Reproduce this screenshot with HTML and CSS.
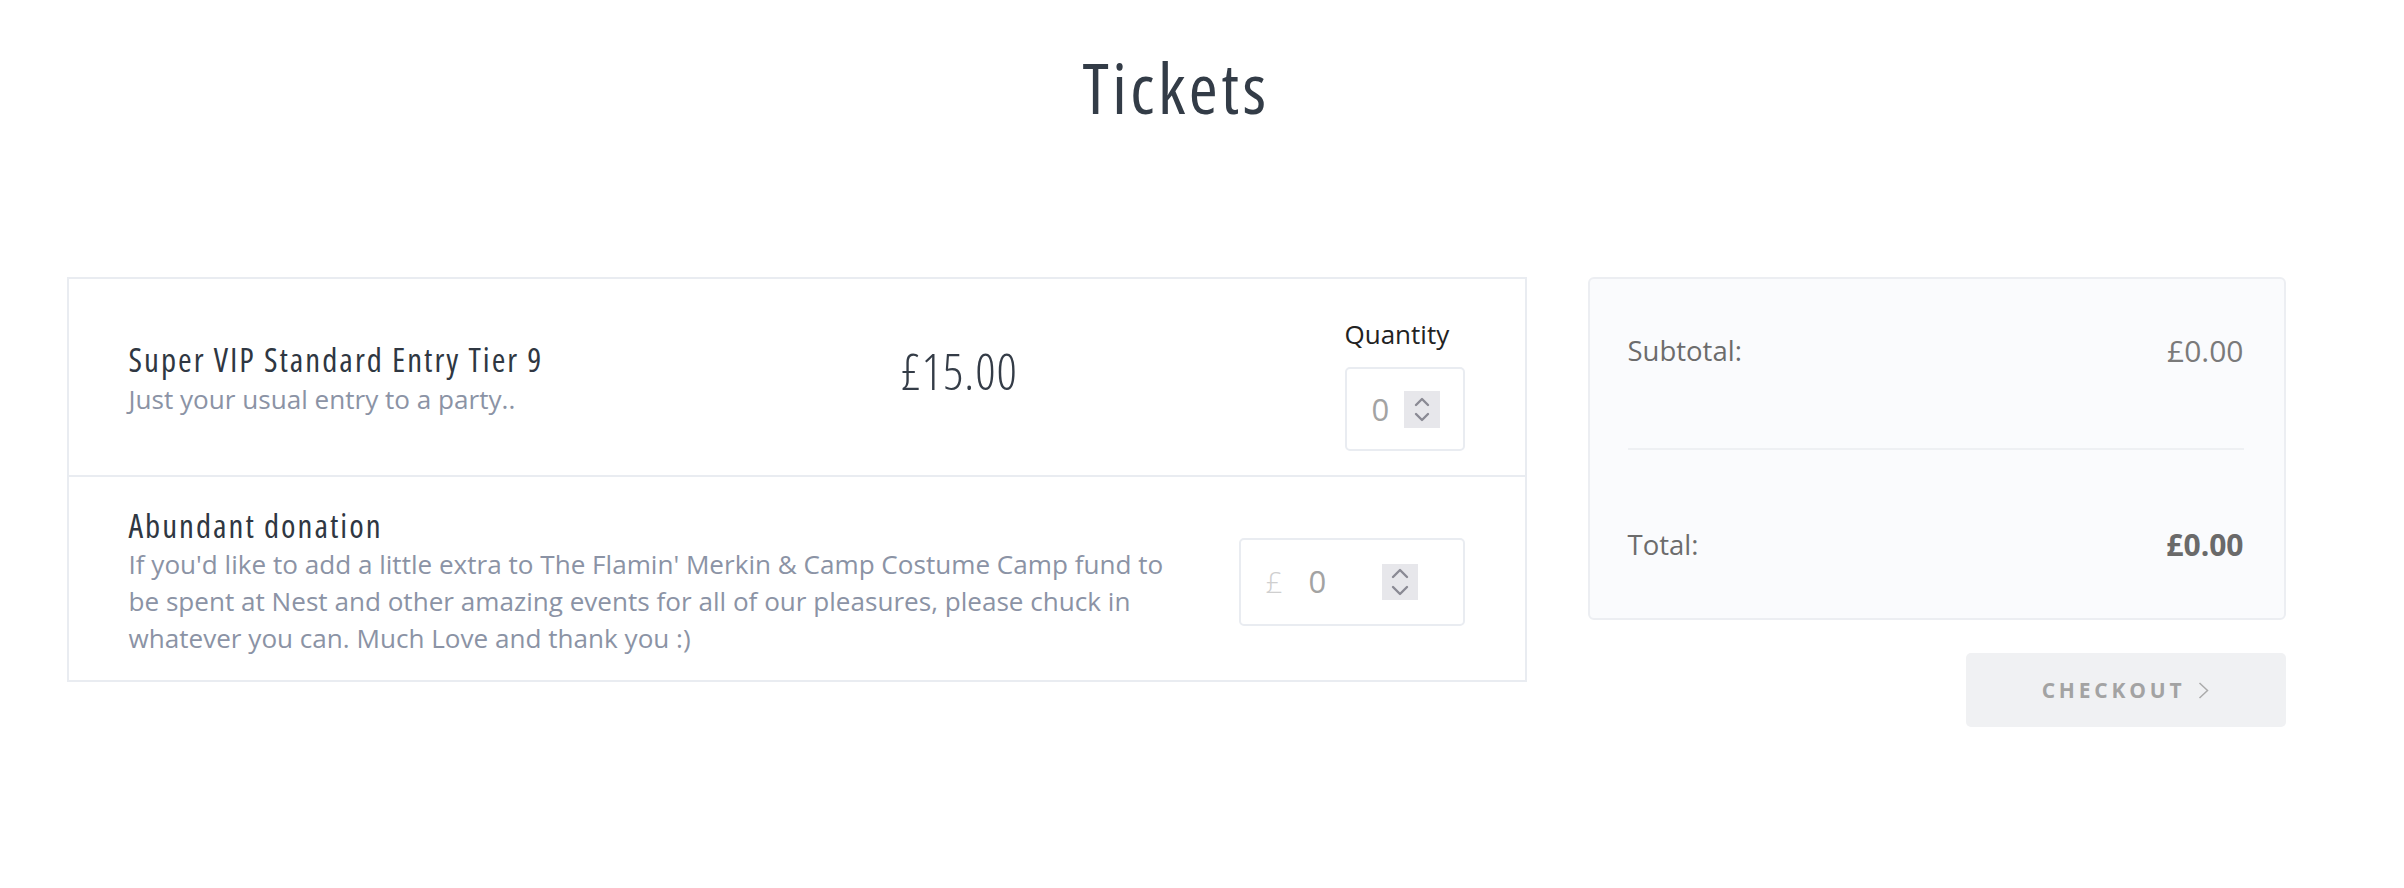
FILE: index.html
```html
<!DOCTYPE html>
<html lang="en">
<head>
<meta charset="utf-8">
<title>Tickets</title>
<link rel="stylesheet" href="styles.css">
</head>
<body>
<div class="page">
  <h1 class="page-title">Tickets</h1>
  <div class="layout">
    <section class="tickets">
      <div class="ticket ticket-main">
        <div class="info">
          <div class="name">Super VIP Standard Entry Tier 9</div>
          <div class="desc">Just your usual entry to a party..</div>
        </div>
        <div class="price">£15.00</div>
        <div class="qty">
          <div class="qty-label">Quantity</div>
          <div class="field qty-field">
            <span class="val">0</span>
            <span class="spin">
              <svg width="36" height="37" viewBox="0 0 36 37"><polyline points="12,14 18,8 24,14" fill="none" stroke="#8a8a94" stroke-width="2.4" stroke-linecap="round" stroke-linejoin="round"/><polyline points="12,23 18,29 24,23" fill="none" stroke="#8a8a94" stroke-width="2.4" stroke-linecap="round" stroke-linejoin="round"/></svg>
            </span>
          </div>
        </div>
      </div>
      <div class="ticket ticket-donation">
        <div class="info info-wide">
          <div class="name">Abundant donation</div>
          <div class="desc desc-long">If you'd like to add a little extra to The Flamin' Merkin &amp; Camp Costume Camp fund to be spent at Nest and other amazing events for all of our pleasures, please chuck in whatever you can. Much Love and thank you :)</div>
        </div>
        <div class="field donation-field">
          <span class="currency">£</span>
          <span class="val">0</span>
          <span class="spin">
            <svg width="36" height="36" viewBox="0 0 36 36"><polyline points="11,13 18,6 25,13" fill="none" stroke="#8a8a94" stroke-width="2.4" stroke-linecap="round" stroke-linejoin="round"/><polyline points="11,23 18,30 25,23" fill="none" stroke="#8a8a94" stroke-width="2.4" stroke-linecap="round" stroke-linejoin="round"/></svg>
          </span>
        </div>
      </div>
    </section>
    <aside class="side">
      <div class="summary">
        <div class="sum-row">
          <span class="sum-label">Subtotal:</span>
          <span class="sum-value">£0.00</span>
        </div>
        <div class="sum-divider"></div>
        <div class="sum-row">
          <span class="sum-label">Total:</span>
          <span class="sum-value sum-total">£0.00</span>
        </div>
      </div>
      <button class="checkout" type="button">
        <span class="checkout-text">CHECKOUT</span>
        <svg class="checkout-chev" width="11" height="17" viewBox="0 0 11 17"><polyline points="1.5,1 9.5,8.5 1.5,16" fill="none" stroke="#ababab" stroke-width="1.5"/></svg>
      </button>
    </aside>
  </div>
</div>
</body>
</html>
```

FILE: styles.css
```css
* { box-sizing: border-box; }

html, body {
  margin: 0;
  padding: 0;
  background: #ffffff;
}

body {
  font-family: "Open Sans", "Noto Sans", "Liberation Sans", sans-serif;
  color: #333;
}

.page {
  width: 2352px;
  padding-top: 46px;
}

.page-title {
  margin: 0 0 149px;
  text-align: center;
  font-family: "Open Sans", "Noto Sans", sans-serif;
  font-stretch: 75%;
  font-weight: 400;
  font-size: 70px;
  line-height: 82px;
  letter-spacing: 3.5px;
  color: #333c47;
}

.layout {
  width: 2219px;
  margin: 0 auto;
  display: flex;
  align-items: flex-start;
  gap: 61px;
}

.tickets {
  flex: 0 0 1460px;
  border: 2px solid #e9ecf1;
}

.ticket {
  display: flex;
  padding: 0 60px;
}

.ticket-main {
  height: 198px;
  align-items: center;
  border-bottom: 2px solid #e9ecf1;
}

.info {
  flex: 0 0 772px;
  margin-top: 4px;
}

.info-wide {
  flex: 0 0 1045px;
  margin-top: 0;
}

.name {
  font-stretch: 75%;
  font-size: 33px;
  line-height: 40px;
  font-weight: 400;
  letter-spacing: 2px;
  color: #2f3742;
}

.desc {
  font-size: 26.1px;
  line-height: 37px;
  color: #8b93a5;
}

.ticket-main .desc {
  margin-top: 1px;
}

.price {
  margin-top: -12px;
  font-stretch: 75%;
  font-weight: 300;
  font-size: 50px;
  line-height: 60px;
  letter-spacing: 1px;
  color: #343c47;
}

.qty {
  margin-left: auto;
  margin-top: 16px;
  display: flex;
  flex-direction: column;
  align-items: flex-start;
}

.qty-label {
  font-size: 26px;
  line-height: 30px;
  color: #222;
  margin-bottom: 18px;
}

.field {
  display: flex;
  align-items: center;
  border: 2px solid #e9ecf1;
  border-radius: 5px;
  background: #fff;
}

.qty-field {
  width: 120px;
  height: 84px;
  padding-left: 25px;
}

.val {
  font-size: 31px;
  color: #a3a3a3;
  font-weight: 400;
  line-height: 1;
}

.qty-field .val {
  width: 32px;
}

.spin {
  display: flex;
  width: 36px;
  height: 37px;
  background: #e7e7eb;
}

.ticket-donation {
  padding-top: 29px;
  padding-bottom: 23px;
  align-items: flex-start;
}

.donation-field {
  margin-left: auto;
  align-self: center;
  width: 226px;
  height: 88px;
  padding-left: 25px;
}

.currency {
  font-size: 30px;
  color: #cfcfcf;
  font-weight: 300;
  width: 43px;
  line-height: 1;
}

.donation-field .val {
  width: 73px;
}

.donation-field .spin {
  height: 36px;
}

.side {
  flex: 0 0 698px;
  display: flex;
  flex-direction: column;
  align-items: flex-end;
}

.summary {
  width: 100%;
  background: #fafbfd;
  border: 2px solid #eceef2;
  border-radius: 6px;
  padding: 54px 40px 57px 38px;
}

.sum-row {
  display: flex;
  justify-content: space-between;
  align-items: center;
  height: 34px;
  font-size: 27.5px;
  color: #6c6c6c;
}

.sum-value {
  font-size: 30px;
  color: #7a7a7a;
  font-weight: 400;
}

.sum-total {
  font-weight: 700;
  color: #6a6a6a;
}

.sum-divider {
  height: 2px;
  background: #eef0f3;
  margin: 81px 0 77px;
}

.checkout {
  margin-top: 33px;
  width: 320px;
  height: 74px;
  border: none;
  border-radius: 5px;
  background: #f0f1f3;
  display: flex;
  align-items: center;
  justify-content: center;
  gap: 13px;
  padding: 0;
  font-family: "Open Sans", "Noto Sans", sans-serif;
  cursor: pointer;
}

.checkout-text {
  font-size: 21px;
  font-weight: 700;
  letter-spacing: 3.8px;
  color: #a3a3a3;
}
```
